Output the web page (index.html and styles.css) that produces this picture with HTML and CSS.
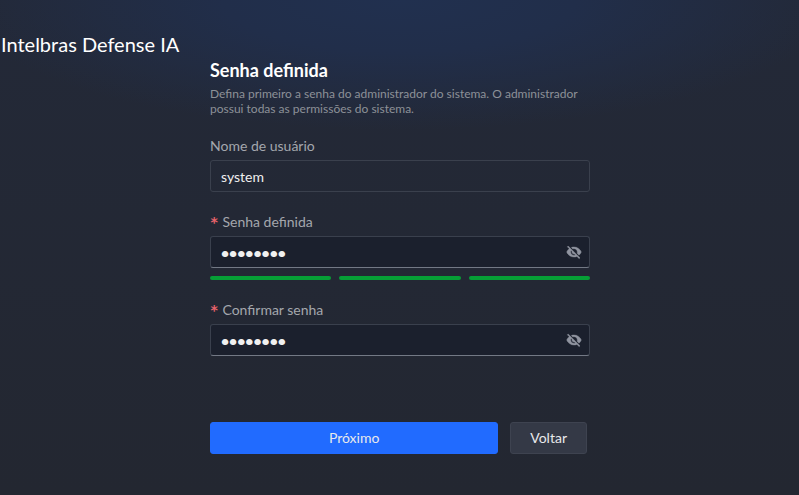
FILE: index.html
```html
<!DOCTYPE html>
<html lang="pt-BR">
<head>
    <meta charset="UTF-8">
    <meta name="viewport" content="width=device-width, initial-scale=1.0">
    <title>Intelbras Defense IA</title>
    <link rel="stylesheet" href="styles.css">
</head>
<body>

<header class="brand">Intelbras Defense IA</header>

<main class="container">
    <h1>Senha definida</h1>
    <p class="description">Defina primeiro a senha do administrador do sistema. O administrador possui todas as permissões do sistema.</p>

    <form id="passwordForm">
        <div class="field">
            <label for="username">Nome de usuário</label>
            <input type="text" id="username" name="username" value="system" readonly>
        </div>

        <div class="field">
            <label for="password" class="required">Senha definida</label>
            <div class="password-box">
                <input type="password" id="password" name="password" value="12345678">
                <button type="button" class="toggle" aria-label="Mostrar senha">
                    <svg viewBox="0 0 24 24" width="16" height="16"><path d="M12 7c2.76 0 5 2.24 5 5 0 .65-.13 1.26-.36 1.83l2.92 2.92c1.51-1.26 2.7-2.89 3.43-4.75-1.73-4.39-6-7.5-11-7.5-1.4 0-2.74.25-3.98.7l2.16 2.16C10.74 7.13 11.35 7 12 7zM2 4.27l2.28 2.28.46.46C3.08 8.3 1.78 10.02 1 12c1.73 4.39 6 7.5 11 7.5 1.55 0 3.03-.3 4.38-.84l.42.42L19.73 22 21 20.73 3.27 3 2 4.27zM7.53 9.8l1.55 1.55c-.05.21-.08.43-.08.65 0 1.66 1.34 3 3 3 .22 0 .44-.03.65-.08l1.55 1.55c-.67.33-1.41.53-2.2.53-2.76 0-5-2.24-5-5 0-.79.2-1.53.53-2.2z"/></svg>
                </button>
            </div>
            <!-- Password strength -->
            <div class="strength">
                <span></span>
                <span></span>
                <span></span>
            </div>
        </div>

        <div class="field">
            <label for="confirm" class="required">Confirmar senha</label>
            <div class="password-box">
                <input type="password" id="confirm" name="confirm" value="12345678">
                <button type="button" class="toggle" aria-label="Mostrar senha">
                    <svg viewBox="0 0 24 24" width="16" height="16"><path d="M12 7c2.76 0 5 2.24 5 5 0 .65-.13 1.26-.36 1.83l2.92 2.92c1.51-1.26 2.7-2.89 3.43-4.75-1.73-4.39-6-7.5-11-7.5-1.4 0-2.74.25-3.98.7l2.16 2.16C10.74 7.13 11.35 7 12 7zM2 4.27l2.28 2.28.46.46C3.08 8.3 1.78 10.02 1 12c1.73 4.39 6 7.5 11 7.5 1.55 0 3.03-.3 4.38-.84l.42.42L19.73 22 21 20.73 3.27 3 2 4.27zM7.53 9.8l1.55 1.55c-.05.21-.08.43-.08.65 0 1.66 1.34 3 3 3 .22 0 .44-.03.65-.08l1.55 1.55c-.67.33-1.41.53-2.2.53-2.76 0-5-2.24-5-5 0-.79.2-1.53.53-2.2z"/></svg>
                </button>
            </div>
        </div>

        <div class="actions">
            <button type="submit" class="primary">Próximo</button>
            <button type="button" class="secondary">Voltar</button>
        </div>
    </form>
</main>

</body>
</html>
```

FILE: styles.css
```css
* {
    box-sizing: border-box;
}

body {
    margin: 0;
    padding-left: 1px;
    min-height: 100vh;
    font-family: Lato, sans-serif;
    font-size: 14px;
    line-height: 20px;
    color: #e8e9eb;
    background: radial-gradient(ellipse 55% 130px at 50% 0, #21304f 0%, #212e4a 40%, rgba(33, 46, 74, 0) 100%) no-repeat, linear-gradient(#232938, #232731);
}

.brand {
    padding-top: 32px;
    font-size: 20px;
    line-height: 24px;
    color: #fff;
}

.container {
    max-width: 380px;
    margin: 0 auto;
}

h1 {
    margin: 0;
    padding-top: 2px;
    font-size: 18px;
    line-height: 24px;
    color: #fff;
}

.description {
    margin: 4px 0 20px;
    font-size: 12px;
    line-height: 15px;
    color: #8d9198;
}

.field {
    margin-bottom: 20px;
}

label {
    display: block;
    margin-bottom: 4px;
    color: #a4a7ad;
}

.required::before {
    content: "*";
    margin-right: 4px;
    font-family: "DejaVu Sans Mono", monospace;
    font-weight: bold;
    line-height: 1;
    color: #e8636b;
}

input {
    display: block;
    width: 100%;
    height: 32px;
    padding: 0 10px;
    border: 1px solid #3a404d;
    border-radius: 3px;
    background-color: transparent;
    font: inherit;
    color: #f0f0f0;
    outline: none;
}

.password-box {
    position: relative;
}

input[type="password"] {
    padding-right: 32px;
    border-bottom-color: #737985;
    background-color: #1b202d;
    font-weight: 900;
}

/* Eye icon sits over the right end of the input */
.toggle {
    position: absolute;
    top: 8px;
    right: 8px;
    height: 16px;
    padding: 0;
    border: none;
    background: none;
    cursor: pointer;
}

.toggle svg {
    display: block;
    fill: #9094a0;
    stroke: #9094a0;
    stroke-width: 0.6;
}

.strength {
    display: flex;
    gap: 8px;
    margin-top: 8px;
}

.strength span {
    flex: 1;
    height: 4px;
    border-radius: 2px;
    background-color: #069f36;
}

.actions {
    display: flex;
    gap: 12px;
    margin-top: 66px;
    padding-right: 3px;
}

.primary,
.secondary {
    height: 32px;
    padding: 0 19px;
    border: 1px solid #3e4350;
    border-radius: 3px;
    background-color: #343946;
    font: inherit;
    color: #e8e9eb;
    cursor: pointer;
}

.primary {
    flex: 1;
    border-color: #216bff;
    background-color: #216bff;
}
```
